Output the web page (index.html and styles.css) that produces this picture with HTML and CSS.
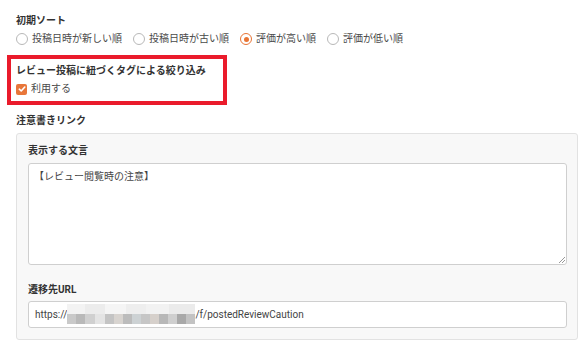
FILE: index.html
```html
<!DOCTYPE html>
<html lang="ja">
<head>
  <meta charset="UTF-8">
  <title>レビュー設定</title>
  <link rel="stylesheet" href="styles.css">
</head>
<body>
  <div class="campo">
    <div class="titulo">初期ソート</div>
    <div class="radios">
      <label class="opcao"><span class="radio"></span>投稿日時が新しい順</label>
      <label class="opcao"><span class="radio"></span>投稿日時が古い順</label>
      <label class="opcao"><span class="radio marcado"></span>評価が高い順</label>
      <label class="opcao"><span class="radio"></span>評価が低い順</label>
    </div>
  </div>

  <div class="campo destaque">
    <div class="titulo">レビュー投稿に紐づくタグによる絞り込み</div>
    <label class="opcao"><span class="check">
      <svg width="8" height="8" viewBox="0 0 8 8"><path d="M1.3 4.2 L3.2 6 L6.8 2" fill="none" stroke="#fff" stroke-width="1.6" stroke-linecap="round" stroke-linejoin="round"/></svg>
    </span>利用する</label>
    <div class="marca"></div>
  </div>

  <div class="campo">
    <div class="titulo">注意書きリンク</div>
    <div class="painel">
      <div class="titulo">表示する文言</div>
      <div class="texto">【レビュー閲覧時の注意】<span class="alca"></span></div>
      <div class="titulo titulo-url">遷移先URL</div>
      <div class="url">https://<span class="mosaico"></span>/f/postedReviewCaution</div>
    </div>
  </div>
</body>
</html>
```

FILE: styles.css
```css
body {
  margin: 0;
  padding: 14px 7px 0 16px;
  font-family: Roboto, "Noto Sans CJK JP", sans-serif;
  font-size: 10px;
  line-height: 14px;
  color: #444;
  background-color: white;
}

.campo {
  position: relative;
  margin-bottom: 18px;
}

.destaque {
  margin-bottom: 18px;
}

.titulo {
  font-weight: bold;
  color: #333;
}

.radios {
  display: flex;
  gap: 11px;
  margin-top: 4px;
}

.opcao {
  display: flex;
  align-items: center;
  gap: 4px;
  color: #4a4a4a;
}

.destaque .opcao {
  margin-top: 4px;
}

.radio {
  width: 10px;
  height: 10px;
  border: 1px solid #b8b8b8;
  border-radius: 50%;
  background-color: white;
  box-sizing: content-box;
  position: relative;
}

.radio.marcado {
  border-color: #e87434;
}

.radio.marcado::after {
  content: "";
  position: absolute;
  left: 2.5px;
  top: 2.5px;
  width: 5px;
  height: 5px;
  border-radius: 50%;
  background-color: #e87434;
}

.check {
  width: 11px;
  height: 11px;
  border-radius: 2px;
  background-color: #e8763a;
  display: flex;
  align-items: center;
  justify-content: center;
}

.marca {
  position: absolute;
  left: -9px;
  top: -9px;
  width: 212px;
  height: 42px;
  border: 4px solid #ea1b2b;
}

.painel {
  margin-top: 5px;
  background-color: #f8f8f8;
  border: 1px solid #e2e2e2;
  border-radius: 3px;
  padding: 10px 10px 11px 11px;
}

.texto {
  position: relative;
  margin-top: 5px;
  height: 88px;
  background-color: white;
  border: 1px solid #cfcfcf;
  border-radius: 3px;
  padding: 6px 5px;
  color: #444;
}

.alca {
  position: absolute;
  right: 1px;
  bottom: 1px;
  width: 6px;
  height: 6px;
  background: linear-gradient(135deg, transparent 45%, #999 45%, #999 55%, transparent 55%, transparent 72%, #999 72%, #999 82%, transparent 82%);
}

.titulo-url {
  margin-top: 18px;
}

.url {
  margin-top: 4px;
  height: 25px;
  display: flex;
  align-items: center;
  background-color: white;
  border: 1px solid #cfcfcf;
  border-radius: 3px;
  padding: 0 6px;
  color: #444;
}

.mosaico {
  width: 128px;
  height: 20px;
  margin-top: -2px;
  background:
    linear-gradient(90deg, #f3f3f3 0 14%, #ececec 14% 30%, #f5f5f5 30% 46%, #eeeeee 46% 62%, #f2f2f2 62% 80%, #ebebeb 80% 100%) top / 100% 50% no-repeat,
    linear-gradient(90deg, #c9c9c9 0 7%, #b9b9b9 7% 14%, #d0d0d0 14% 22%, #e4e4e4 22% 30%, #c4c4c4 30% 37%, #d8d4d0 37% 44%, #bcbcbc 44% 51%, #cdd2d4 51% 58%, #c6c6c6 58% 65%, #d6d0cb 65% 72%, #b8b8b8 72% 79%, #cfcfcf 79% 86%, #a9a9a9 86% 93%, #c3c3c3 93% 100%) bottom / 100% 50% no-repeat;
}
```
